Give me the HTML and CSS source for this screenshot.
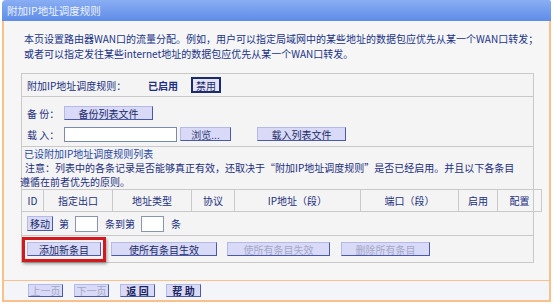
FILE: index.html
```html
<!DOCTYPE html>
<html lang="zh-CN">
<head>
    <meta charset="UTF-8">
    <title>附加IP地址调度规则</title>
    <link rel="stylesheet" href="styles.css">
</head>
<body>

<div class="frame">
    <div class="titlebar">附加IP地址调度规则</div>

    <div class="content">
        <p class="intro">本页设置路由器WAN口的流量分配。例如，用户可以指定局域网中的某些地址的数据包应优先从某一个WAN口转发；<br>或者可以指定发往某些internet地址的数据包应优先从某一个WAN口转发。</p>

        <div class="panel">
            <div class="row-status">
                <span class="status-label">附加IP地址调度规则：</span>
                <span class="status-on">已启用</span>
                <span class="btn btn-pressed">禁用</span>
            </div>

            <div class="row-files">
                <div class="file-line">
                    <span class="file-label">备 份：</span>
                    <span class="btn btn-backup">备份列表文件</span>
                </div>
                <div class="file-line">
                    <span class="file-label">载 入：</span>
                    <span class="file-input"></span>
                    <span class="btn btn-browse">浏览...</span>
                    <span class="btn btn-load">载入列表文件</span>
                </div>
            </div>

            <div class="list-info">
                <div class="list-title">已设附加IP地址调度规则列表</div>
                <div class="note">注意：列表中的各条记录是否能够真正有效，还取决于“附加IP地址调度规则”是否已经启用。并且以下各条目</div>
                <div class="note-cont">遵循在前者优先的原则。</div>
            </div>

            <table class="rules">
                <tr>
                    <th class="c-id">ID</th>
                    <th class="c-out">指定出口</th>
                    <th class="c-type">地址类型</th>
                    <th class="c-proto">协议</th>
                    <th class="c-ip">IP地址（段）</th>
                    <th class="c-port">端口（段）</th>
                    <th class="c-on">启用</th>
                    <th class="c-cfg">配置</th>
                </tr>
            </table>

            <div class="row-move">
                <span class="btn btn-move">移动</span>
                <span class="move-text">第</span>
                <span class="small-input"></span>
                <span class="move-text">条到第</span>
                <span class="small-input"></span>
                <span class="move-text">条</span>
            </div>

            <div class="row-actions">
                <span class="highlight"><span class="btn btn-add">添加新条目</span></span>
                <span class="btn btn-all-on">使所有条目生效</span>
                <span class="btn btn-all-off disabled">使所有条目失效</span>
                <span class="btn btn-del disabled">删除所有条目</span>
            </div>
        </div>
    </div>

    <div class="footer">
        <span class="btn btn-nav disabled">上一页</span>
        <span class="btn btn-nav disabled">下一页</span>
        <span class="btn btn-nav strong">返 回</span>
        <span class="btn btn-nav strong">帮 助</span>
    </div>
</div>

</body>
</html>
```

FILE: styles.css
```css
body {
    margin: 0;
    background: #fff;
    font-family: "Noto Sans CJK SC", "DejaVu Sans", sans-serif;
    font-size: 10px;
    color: #1c2f80;
}

.frame {
    margin-left: 2px;
    width: 549px;
}

.titlebar {
    height: 21px;
    line-height: 21px;
    padding-left: 5px;
    background: linear-gradient(#8aaef3, #5e8ce8);
    color: #eef3ff;
    font-size: 10.5px;
    border-top-left-radius: 4px;
    border-top-right-radius: 2px;
}

.content {
    background: #f6f6f6;
    border-left: 2px solid #f9c08c;
    border-right: 2px solid #f9c08c;
    padding: 10px 15px 17px 17px;
}

.intro {
    margin: 0 0 12px 3px;
    line-height: 15px;
    white-space: nowrap;
    color: #1a3388;
}

.panel {
    width: 511px;
    border: 1px solid #c9c9c9;
    background: #f4f4f4;
}

.row-status {
    height: 22px;
    display: flex;
    align-items: center;
    padding-left: 5px;
    border-bottom: 1px solid #c9c9c9;
}

.status-label {
    width: 121px;
}

.status-on {
    font-weight: bold;
    width: 43px;
}

.btn {
    display: inline-flex;
    align-items: center;
    justify-content: center;
    box-sizing: border-box;
    height: 14px;
    background: #d9daf7;
    border: 1px solid #4b59aa;
    border-top-color: #b4b9e6;
    border-left-color: #b4b9e6;
    color: #1a2a66;
    font-size: 10px;
}

.btn.disabled {
    color: #a3a8c8;
}

.btn-pressed {
    width: 30px;
    height: 16px;
    border: 2px solid #1c2a6e;
    background: #e4e4f8;
}

.row-files {
    height: 50px;
    padding-top: 9px;
    box-sizing: border-box;
    border-bottom: 1px solid #c9c9c9;
}

.file-line {
    display: flex;
    align-items: center;
    padding-left: 5px;
    height: 14px;
    margin-bottom: 7px;
}

.file-label {
    width: 37px;
}

.btn-backup {
    width: 89px;
}

.file-input {
    box-sizing: border-box;
    width: 113px;
    height: 15px;
    background: #fff;
    border: 1px solid #7a8aa8;
}

.btn-browse {
    width: 51px;
    margin-left: 3px;
    color: #33407a;
}

.btn-load {
    width: 89px;
    margin-left: 26px;
}

.list-info {
    line-height: 14px;
}

.list-title {
    padding-left: 2px;
    color: #2a48a4;
}

.note {
    padding-left: 3px;
    white-space: nowrap;
}

.note-cont {
    margin-left: -2px;
}

.rules {
    width: 512px;
    border-collapse: collapse;
    table-layout: fixed;
    margin-left: -1px;
}

.rules th {
    height: 21px;
    padding: 0;
    font-weight: normal;
    border: 1px solid #c9c9c9;
    text-align: center;
}

.c-id { width: 21px; }
.c-out { width: 68px; }
.c-type { width: 78px; }
.c-proto { width: 42px; }
.c-ip { width: 125px; }
.c-port { width: 97px; }
.c-on { width: 38px; }
.c-cfg { width: 43px; }

.row-move {
    height: 23px;
    display: flex;
    align-items: center;
    padding-left: 5px;
    border-bottom: 1px solid #c9c9c9;
}

.btn-move {
    width: 26px;
    height: 15px;
    margin-right: 6px;
}

.move-text {
    margin-right: 6px;
}

.small-input {
    box-sizing: border-box;
    width: 23px;
    height: 16px;
    background: #fff;
    border: 1px solid #8a96b0;
    margin-right: 7px;
}

.row-actions {
    height: 26px;
    display: flex;
    align-items: center;
    padding-left: 5px;
}

.highlight {
    position: relative;
    display: inline-flex;
    margin-right: 10px;
}

.highlight::after {
    content: "";
    position: absolute;
    left: -5px;
    top: -5px;
    right: -5px;
    bottom: -6px;
    border: 3px solid #d3191d;
    box-shadow: 1px 2px 3px rgba(0, 0, 0, 0.35);
}

.btn-add {
    width: 74px;
}

.btn-all-on {
    width: 106px;
    margin-right: 10px;
}

.btn-all-off {
    width: 103px;
    margin-right: 11px;
}

.btn-del {
    width: 89px;
}

.footer {
    height: 19px;
    display: flex;
    align-items: center;
    gap: 11px;
    padding-left: 24px;
    background: #f3f5f9;
    border: 2px solid #f9c08c;
    border-top: 1px solid #f9c08c;
}

.btn-nav {
    width: 35px;
    height: 13px;
}

.btn-nav.strong {
    font-weight: bold;
    color: #1a2560;
}
```
